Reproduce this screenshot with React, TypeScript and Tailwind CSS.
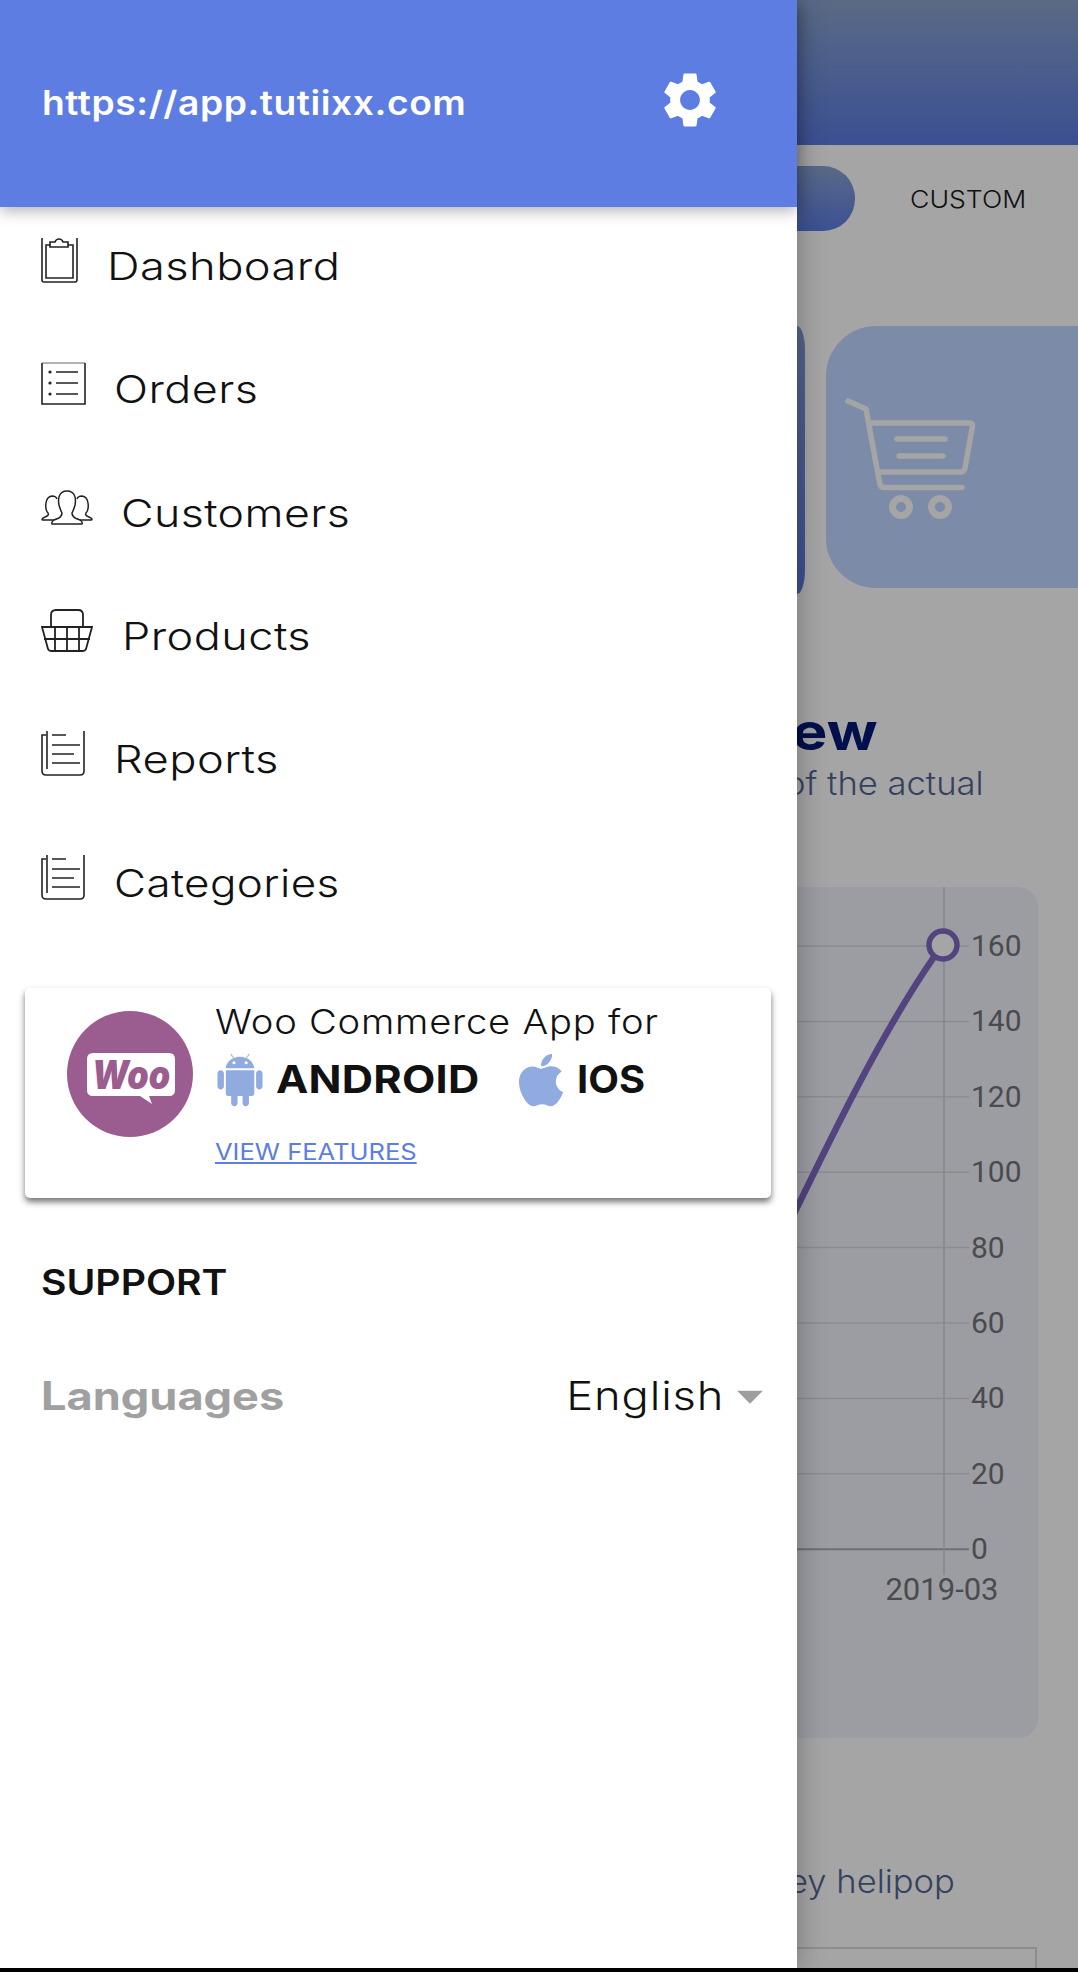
import { MdSettings, MdArrowDropDown } from "react-icons/md";
import { AiFillAndroid } from "react-icons/ai";
import { FaApple } from "react-icons/fa";

const Clipboard = () => (
  <svg width="37" height="45" viewBox="0 0 37 45" fill="none" stroke="#222" strokeWidth="1.6">
    <path d="M1 0V42Q1 44 3 44H34Q36 44 36 42V0" />
    <path d="M9 7H5V40H32V7H27" />
    <path d="M9 9V4H14Q15 1 18 1T22 4H27V9Z" />
  </svg>
);
const ListBox = () => (
  <svg width="45" height="43" viewBox="0 0 45 43" fill="none" stroke="#222" strokeWidth="1.6">
    <path d="M1 1H44" stroke="#999" />
    <path d="M1 1V42H44V1" />
    <path d="M15 10H37M15 21H37M15 32H37" />
    <circle cx="9" cy="10" r="1.6" fill="#222" stroke="none" />
    <circle cx="9" cy="21" r="1.6" fill="#222" stroke="none" />
    <circle cx="9" cy="32" r="1.6" fill="#222" stroke="none" />
  </svg>
);
const People = () => (
  <svg width="52" height="35" viewBox="0 0 52 35" fill="none" stroke="#222" strokeWidth="1.5">
    <path d="M14 30H2Q0 30 2 28L6 26Q8 25 7 23C4 20 3 7 11 6Q15 6 16 9" />
    <path d="M38 30H50Q52 30 50 28L46 26Q44 25 45 23C48 20 49 7 41 6Q37 6 36 9" />
    <path d="M26 1C17 1 17 10 18 15C19 19 20 21 21 23Q21 26 18 28L13 30Q10 32 11 34H41Q42 32 39 30L34 28Q31 26 31 23C32 21 33 19 34 15C35 10 35 1 26 1Z" fill="#fff" />
  </svg>
);
const Basket = () => (
  <svg width="52" height="44" viewBox="0 0 52 44" fill="none" stroke="#222" strokeWidth="1.8">
    <path d="M10 17V6Q10 1 15 1H37Q42 1 42 6V17" />
    <path d="M1 18H51L45 40Q44 42 42 42H10Q8 42 7 40Z" />
    <path d="M14 18V42M26 18V42M38 18V42M3 30H49" />
  </svg>
);
const Report = () => (
  <svg width="45" height="45" viewBox="0 0 45 45" fill="none" stroke="#222" strokeWidth="1.6">
    <path d="M5 4H1V40Q1 44 5 44H39Q43 44 43 40V0" />
    <path d="M6 0V38" />
    <path d="M11 4H25M11 14H39M11 23H33M11 32H39" />
  </svg>
);

const items = [
  { label: "Dashboard", Icon: Clipboard, iconBox: "w-[66px]", stretch: "scale-x-[1.19]" },
  { label: "Orders", Icon: ListBox, iconBox: "w-[73px]", stretch: "scale-x-[1.18]" },
  { label: "Customers", Icon: People, iconBox: "w-[80px]", stretch: "scale-x-[1.175]" },
  { label: "Products", Icon: Basket, iconBox: "w-[81px]", stretch: "scale-x-[1.185]" },
  { label: "Reports", Icon: Report, iconBox: "w-[73px]", stretch: "scale-x-[1.19]" },
  { label: "Categories", Icon: Report, iconBox: "w-[73px]", stretch: "scale-x-[1.155]" },
];

const levels = [160, 140, 120, 100, 80, 60, 40, 20, 0];

export default function App() {
  return (
    <div className="flex h-[1972px] w-[1078px] flex-col overflow-hidden bg-black font-['Inter','Liberation_Sans',sans-serif]">
      <div className="flex h-[1968px] w-full">
        <aside className="relative z-10 flex w-[797px] shrink-0 flex-col bg-white shadow-[0_0_28px_rgba(0,0,0,0.3)]">
          <header className="relative z-10 flex h-[207px] shrink-0 items-center justify-between bg-[#5d7de2] pl-[42px] pr-[74px] shadow-[0_4px_14px_rgba(0,0,0,0.3)]">
            <span className="inline-block origin-left scale-x-[1.11] text-[33.5px] font-semibold tracking-[0.015em] text-white">https://app.tutiixx.com</span>
            <MdSettings className="mb-[7px] text-white" size={66} />
          </header>

          <nav className="-mt-[2px] flex flex-col pl-[41px]">
            {items.map(({ label, Icon, iconBox, stretch }) => (
              <div key={label} className="flex h-[123.3px] items-center">
                <div className={`${iconBox} mb-[12px] shrink-0`}>
                  <Icon />
                </div>
                <span className={`${stretch} inline-block origin-left text-[38px] font-light tracking-[0.01em] text-[#111]`}>{label}</span>
              </div>
            ))}
          </nav>

          <section className="ml-[25px] mt-[43px] flex h-[210px] w-[746px] rounded-[5px] bg-white shadow-[0_4px_6px_rgba(0,0,0,0.55)]">
            <svg className="ml-[42px] mt-[23px] shrink-0" width="126" height="126" viewBox="0 0 126 126">
              <circle cx="63" cy="63" r="63" fill="#9b5c8f" />
              <path d="M26 42H102Q108 42 108 48V79Q108 85 102 85H82L85 93L73 85H26Q20 85 20 79V48Q20 42 26 42Z" fill="#fff" />
              <text x="64" y="78" textAnchor="middle" fontFamily="Inter, sans-serif" fontWeight="900" fontStyle="italic" fontSize="40" textLength="78" lengthAdjust="spacingAndGlyphs" fill="#9b5c8f">Woo</text>
            </svg>
            <div className="ml-[22px] flex flex-col">
              <p className="mt-[12px] inline-block origin-left scale-x-[1.14] whitespace-nowrap text-[33.5px] font-light leading-[44px] tracking-[0.02em] text-[#111]">Woo Commerce App for</p>
              <div className="mt-[10px] flex h-[52px] items-center">
                <AiFillAndroid className="-ml-[5px] shrink-0 text-[#8fabe0]" size={60} />
                <span className="ml-[6px] inline-block origin-left scale-x-[1.14] text-[38px] font-bold tracking-[0.005em] text-[#111]">ANDROID</span>
                <FaApple className="ml-[57px] shrink-0 text-[#8fabe0]" size={60} />
                <span className="ml-[6px] inline-block origin-left scale-x-[1.05] text-[38px] font-bold text-[#111]">IOS</span>
              </div>
              <a className="mt-[32px] inline-block origin-left scale-x-[1.11] self-start text-[23px] leading-[28px] text-[#5d7de2] underline">VIEW FEATURES</a>
            </div>
          </section>

          <h3 className="ml-[41px] mt-[62px] origin-left scale-x-[1.12] text-[35px] font-semibold leading-[44px] text-[#111]">SUPPORT</h3>
          <div className="ml-[41px] mr-[26px] mt-[70px] flex h-[44px] items-center justify-between">
            <span className="inline-block origin-left scale-x-[1.157] text-[39px] font-bold text-[#a0a0a0]">Languages</span>
            <span className="flex items-center">
              <span className="inline-block origin-right scale-x-[1.16] text-[39px] font-light tracking-[0.02em] text-[#111]">English</span>
              <MdArrowDropDown className="-ml-[5px] -mr-[10px] text-[#9e9e9e]" size={62} />
            </span>
          </div>
        </aside>

        <main className="min-w-0 flex-1 overflow-hidden bg-[#a5a5a5]">
          <div className="h-[145px] bg-gradient-to-b from-[#5a6a85] to-[#3b4f92]" />
          <div className="mt-[21px] flex h-[65px] items-center">
            <div className="h-full w-[58px] rounded-r-[32px] bg-gradient-to-b from-[#586a88] to-[#3c5093]" />
            <span className="ml-[55px] mt-[2px] inline-block origin-left scale-x-[1.11] text-[24px] font-light text-[#111]">CUSTOM</span>
          </div>
          <div className="mt-[95px] flex w-[620px] gap-[21px]">
            <div className="h-[268px] w-[8px] rounded-r-[8px_24px] bg-gradient-to-b from-[#53648a] to-[#3b4f92]" />
            <div className="h-[262px] w-[591px] rounded-[50px] bg-[#7c8ba7] pl-[19px] pt-[72px]">
              <svg width="132" height="122" viewBox="55 98 132 122" fill="none" stroke="#a5a5a5" strokeWidth="5.500" strokeLinecap="round" strokeLinejoin="round">
                <path d="M58 101L76 109L90 185Q91 187.500 94 187.500H172" />
                <path d="M81 123H180Q183 123 182.500 126L175 168Q174 172 171 172H88" />
                <path d="M107 139H155M109 156H153" />
                <circle cx="111" cy="207" r="8.500" strokeWidth="7" />
                <circle cx="150" cy="207" r="8.500" strokeWidth="7" />
              </svg>
            </div>
          </div>
          <h2 className="mt-[112px] w-[600px] origin-left -translate-x-[199px] scale-x-[1.15] text-[52px] font-bold leading-[52px] text-[#010f4d]">Overview</h2>
          <p className="mt-[8px] w-[500px] origin-left -translate-x-[12px] scale-x-[1.08] text-[32px] font-light leading-[36px] text-[#35415f]">of the actual</p>
          <div className="ml-[-100px] mr-[40px] mt-[85px] h-[851px] rounded-[20px] bg-[#9c9da3]">
            <svg width="341" height="851" viewBox="697 887 341 851">
              {levels.map((v, i) => {
                const y = 946 + i * 75.4;
                return (
                  <g key={v}>
                    <line x1="697" x2="969" y1={y} y2={y} stroke={v === 0 ? "#6e6f72" : "#8b8c90"} strokeWidth={v === 0 ? 2 : 1.5} />
                    <text x="971" y={y + 10} fontFamily="Roboto, sans-serif" fontSize="30" fill="#4a4b4c">{v}</text>
                  </g>
                );
              })}
              <line x1="944" x2="944" y1="887" y2="1575" stroke="#86878c" strokeWidth="1.5" />
              <text x="942" y="1600" textAnchor="middle" fontFamily="Roboto, sans-serif" fontSize="31" fill="#4a4b4c">2019-03</text>
              <path d="M790 1222C830 1140 880 1035 934 957" fill="none" stroke="#53437f" strokeWidth="6.500" />
              <circle cx="943" cy="945" r="14" fill="#a5a5a5" stroke="#53437f" strokeWidth="5.500" />
            </svg>
          </div>
          <p className="mt-[126px] w-[500px] origin-left -translate-x-[9px] scale-x-[1.08] text-[32px] font-light leading-[36px] text-[#35415f]">ey helipop</p>
          <div className="ml-[-20px] mr-[41px] mt-[47px] h-[60px] border-2 border-[#8e8e8e]" />
        </main>
      </div>
    </div>
  );
}
